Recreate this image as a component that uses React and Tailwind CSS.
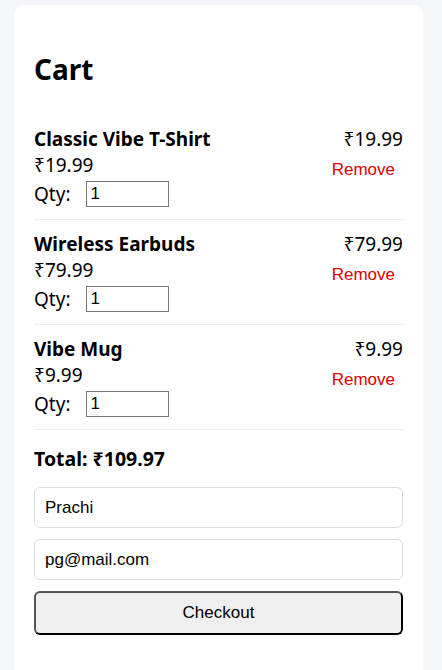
const items = [
  { id: 1, name: 'Classic Vibe T-Shirt', price: 19.99, qty: 1 },
  { id: 2, name: 'Wireless Earbuds', price: 79.99, qty: 1 },
  { id: 3, name: 'Vibe Mug', price: 9.99, qty: 1 },
];

const sans = { fontFamily: '"Noto Sans", "DejaVu Sans", sans-serif' };

export default function App() {
  const total = items.reduce((sum, i) => sum + i.price * i.qty, 0);

  return (
    <div
      className="min-h-[670px] bg-[#f5f6fa] pl-[14px] pr-[19px] pt-[5px] text-black"
      style={sans}
    >
      <div className="min-h-[665px] rounded-t-[10px] bg-white px-[20px] pb-8">
        {/* Heading */}
        <h2 className="pt-[46px] text-[28px] font-bold leading-[37px]">Cart</h2>

        {/* Items */}
        <div className="mt-[27px]">
          {items.map((item) => (
            <div
              key={item.id}
              className="flex justify-between border-b border-[#eee] pt-[12px] pb-[12px]"
            >
              <div className="flex flex-col">
                <span className="text-[19px] font-bold leading-[24px]">{item.name}</span>
                <span className="mt-[2px] text-[19px] leading-[24px]">₹{item.price.toFixed(2)}</span>
                <label className="mt-[4px] flex items-center text-[19px] leading-[26px]">
                  Qty:
                  <input
                    type="number"
                    defaultValue={item.qty}
                    className="ml-[16px] h-[26px] w-[83px] border border-[#767676] px-[3px] font-['Liberation_Sans',Arial,sans-serif] text-[17px]"
                  />
                </label>
              </div>
              <div className="flex flex-col items-end">
                <span className="text-[19px] leading-[24px]">₹{item.price.toFixed(2)}</span>
                <button className="mt-[6px] px-[8px] py-[4px] font-['Liberation_Sans',Arial,sans-serif] text-[17px] leading-[18px] text-[#e00000]">
                  Remove
                </button>
              </div>
            </div>
          ))}
        </div>

        {/* Total */}
        <h3 className="mt-[17px] text-[19.5px] font-bold leading-[24px]">
          Total: ₹{total.toFixed(2)}
        </h3>

        {/* Checkout form */}
        <div className="mt-[16px] flex flex-col gap-[11px] font-['Liberation_Sans',Arial,sans-serif] text-[17px]">
          <input
            defaultValue="Prachi"
            className="h-[41px] rounded-[6px] border border-[#ddd] px-[10px] outline-none"
          />
          <input
            defaultValue="pg@mail.com"
            className="h-[41px] rounded-[6px] border border-[#ddd] px-[10px] outline-none"
          />
          <button className="h-[44px] rounded-[6px] border-2 border-t-[#555] border-l-[#555] border-b-black border-r-black bg-[#efefef]">
            Checkout
          </button>
        </div>
      </div>
    </div>
  );
}
